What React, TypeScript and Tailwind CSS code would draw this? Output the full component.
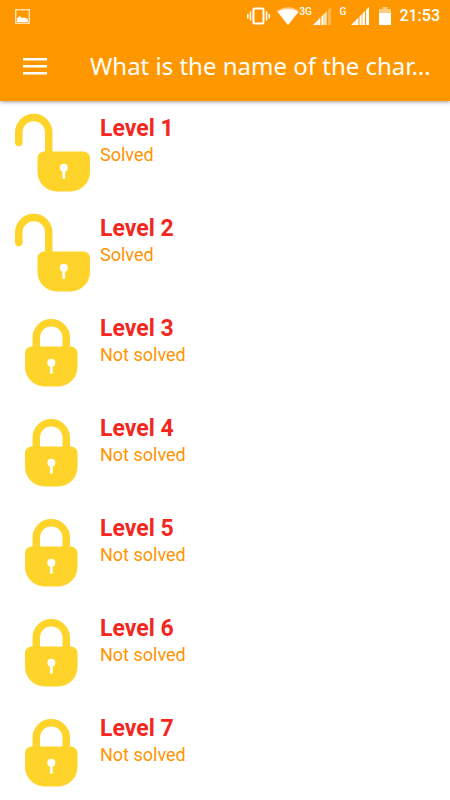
import React from "react";

type Level = {
    id: number;
    solved: boolean;
};

const LEVELS: Level[] = [
    { id: 1, solved: true },
    { id: 2, solved: true },
    { id: 3, solved: false },
    { id: 4, solved: false },
    { id: 5, solved: false },
    { id: 6, solved: false },
    { id: 7, solved: false },
];

export default function App() {
    return (
        <div className="flex h-screen flex-col bg-white font-['Roboto',sans-serif]">
            <header className="z-10 shrink-0 bg-[#ff9800] text-white shadow-[0_1px_4px_rgba(0,0,0,0.4)]">
                <StatusBar />
                <div className="flex items-center pt-[18px] pr-3 pb-[19px] pl-[23px]">
                    <button type="button" aria-label="Open menu" className="shrink-0 cursor-pointer">
                        <svg width="24" height="18" viewBox="0 0 24 18" fill="currentColor">
                            <path d="M0 1h24v2.5H0zM0 8h24v2.5H0zM0 15h24v2.5H0z" />
                        </svg>
                    </button>
                    <h1 className="ml-[43px] truncate font-['Noto_Sans',sans-serif] text-2xl leading-8">
                        What is the name of the char...
                    </h1>
                </div>
            </header>
            <main className="min-h-0 flex-1 overflow-y-auto [scrollbar-width:none]">
                <ul>
                    {LEVELS.map(level => (
                        <LevelRow key={level.id} level={level} />
                    ))}
                </ul>
            </main>
        </div>
    );
}

function StatusBar() {
    return (
        <div className="flex h-8 items-center pr-[10px] pl-[15px]">
            <svg width="15" height="15" viewBox="0 0 15 15">
                <rect x="0.75" y="0.75" width="13.5" height="13.5" fill="none" stroke="#fff" strokeWidth="1.2" opacity="0.85" />
                <path d="M2 13V9.5L4.5 7l2.5 2 2-0.5L11 9l2 1.5V13z" fill="#fff" />
            </svg>
            <div className="ml-auto flex items-center">
                <svg width="23" height="18" viewBox="0 0 23 18" fill="none" stroke="#fff">
                    <rect x="6.5" y="1.5" width="10" height="15" rx="1" strokeWidth="2" />
                    <path d="M3.5 4.5v9M19.5 4.5v9M0.8 7v4.5M22.2 7v4.5" strokeWidth="1.5" />
                </svg>
                <svg className="ml-[7px]" width="22" height="18" viewBox="0 0 22 18">
                    <path d="M0 4Q11-3.5 22 4L11 18z" fill="#fff" opacity="0.5" />
                    <path d="M0.5 4.8Q11-1 21.5 4.8L11 18z" fill="#fff" />
                </svg>
                <span className="mb-2 w-[14px] text-[10px] leading-3 font-medium">3G</span>
                <Signal weak />
                <span className="mb-2 ml-2 w-[12px] text-[10px] leading-3 font-medium">G</span>
                <Signal />
                <svg className="ml-[10px]" width="12" height="18" viewBox="0 0 12 18" fill="#fff">
                    <path d="M3.5 0h5v2H12v4H0V2h3.5z" opacity="0.5" />
                    <path d="M0 6h12v12H0z" />
                </svg>
                <span className="ml-2 text-base leading-5 font-medium">21:53</span>
            </div>
        </div>
    );
}

function Signal({ weak = false }: { weak?: boolean }) {
    return (
        <svg width="18" height="18" viewBox="0 0 18 18" fill="#fff">
            <path d="M0 18L4 14V18z" />
            <path d="M4 14L7.5 10.5V18H4z" opacity="0.75" />
            <path d="M5 13L7 11V18H5z" />
            <path d="M8.5 9.5L10.5 7.5V18H8.5z" />
            <path d="M10.5 7.5L12.5 5.5V18H10.5z" opacity="0.65" />
            <path d="M12 6L14 4V18H12z" opacity={weak ? 0.6 : 1} />
            <path d="M15 3L18 0V18H15z" opacity={weak ? 0.3 : 1} />
        </svg>
    );
}

function LevelRow({ level }: { level: Level }) {
    return (
        <li>
            <button type="button" className="flex h-[100px] w-full cursor-pointer items-start text-left">
                {level.solved ? <OpenLock /> : <ClosedLock />}
                <span className="flex flex-col pt-[14px]">
                    <span className="text-[23px] leading-7 font-bold text-[#f4261e]">
                        Level {level.id}
                    </span>
                    <span className="text-lg leading-6 text-[#ff9300]">
                        {level.solved ? "Solved" : "Not solved"}
                    </span>
                </span>
            </button>
        </li>
    );
}

function OpenLock() {
    return (
        <svg className="shrink-0" width="100" height="100" viewBox="0 0 100 100">
            <path d="M18.75 41.5V31.5a15 15 0 0 1 30 0V55" fill="none" stroke="#ffd42a" strokeWidth="7.5" strokeLinecap="round" />
            <path d="M44 50.5h39.5a6.5 6.5 0 0 1 6.5 6.5v14a19.5 19.5 0 0 1-19.5 19.5h-13.5A19.5 19.5 0 0 1 37.5 71V57a6.5 6.5 0 0 1 6.5-6.5z" fill="#ffd42a" />
            <circle cx="63.8" cy="66.7" r="4" fill="#fff" />
            <path d="M63.8 68v8.5" stroke="#fff" strokeWidth="2.8" strokeLinecap="round" />
        </svg>
    );
}

function ClosedLock() {
    return (
        <svg className="shrink-0" width="100" height="100" viewBox="0 0 100 100">
            <path d="M36.25 50V36.7a15 15 0 0 1 30 0V50" fill="none" stroke="#ffd42a" strokeWidth="7.5" />
            <path d="M31.5 45.5h39.5a6.5 6.5 0 0 1 6.5 6.5v14a19.5 19.5 0 0 1-19.5 19.5h-13.5A19.5 19.5 0 0 1 25 66V52a6.5 6.5 0 0 1 6.5-6.5z" fill="#ffd42a" />
            <circle cx="51.3" cy="61.7" r="4" fill="#fff" />
            <path d="M51.3 63v8.5" stroke="#fff" strokeWidth="2.8" strokeLinecap="round" />
        </svg>
    );
}
